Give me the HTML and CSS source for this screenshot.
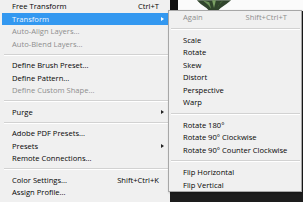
FILE: index.html
```html
<!DOCTYPE html>
<html>
<head>
<meta charset="utf-8">
<link rel="stylesheet" href="styles.css">
</head>
<body>
<div class="screen">
  <div class="menu">
    <div class="item"><span class="label">Free Transform</span><span class="key">Ctrl+T</span><span class="sub"></span></div>
    <div class="item active"><span class="label">Transform</span><span class="key"></span><span class="sub"><i class="arrow"></i></span></div>
    <div class="item disabled"><span class="label">Auto-Align Layers...</span><span class="key"></span><span class="sub"></span></div>
    <div class="item disabled"><span class="label">Auto-Blend Layers...</span><span class="key"></span><span class="sub"></span></div>
    <div class="sep"></div>
    <div class="item"><span class="label">Define Brush Preset...</span><span class="key"></span><span class="sub"></span></div>
    <div class="item"><span class="label">Define Pattern...</span><span class="key"></span><span class="sub"></span></div>
    <div class="item disabled"><span class="label">Define Custom Shape...</span><span class="key"></span><span class="sub"></span></div>
    <div class="sep"></div>
    <div class="item"><span class="label">Purge</span><span class="key"></span><span class="sub"><i class="arrow"></i></span></div>
    <div class="sep"></div>
    <div class="item"><span class="label">Adobe PDF Presets...</span><span class="key"></span><span class="sub"></span></div>
    <div class="item"><span class="label">Presets</span><span class="key"></span><span class="sub"><i class="arrow"></i></span></div>
    <div class="item"><span class="label">Remote Connections...</span><span class="key"></span><span class="sub"></span></div>
    <div class="sep"></div>
    <div class="item"><span class="label">Color Settings...</span><span class="key">Shift+Ctrl+K</span><span class="sub"></span></div>
    <div class="item"><span class="label">Assign Profile...</span><span class="key"></span><span class="sub"></span></div>
  </div>
  <div class="canvas">
    <div class="photo">
      <div class="frame"></div>
      <svg class="plant" width="38" height="11" viewBox="0 0 40 11">
        <path d="M2 0 L38 0 L33 4 L27 8 L24 11 L15 11 L12 8 L6 4 Z" fill="#30452c"/>
        <path d="M8 0 L14 5 L17 9 L15 2 Z" fill="#6c9158"/>
        <path d="M30 0 L25 5 L23 9 L27 2 Z" fill="#5d8249"/>
        <path d="M18 0 L20 8 L22 0 Z" fill="#7aa063"/>
      </svg>
    </div>
    <div class="dark"></div>
  </div>
  <div class="submenu">
    <div class="item disabled"><span class="label">Again</span><span class="key">Shift+Ctrl+T</span><span class="sub"></span></div>
    <div class="sep"></div>
    <div class="item"><span class="label">Scale</span></div>
    <div class="item"><span class="label">Rotate</span></div>
    <div class="item"><span class="label">Skew</span></div>
    <div class="item"><span class="label">Distort</span></div>
    <div class="item"><span class="label">Perspective</span></div>
    <div class="item"><span class="label">Warp</span></div>
    <div class="sep"></div>
    <div class="item"><span class="label">Rotate 180°</span></div>
    <div class="item"><span class="label">Rotate 90° Clockwise</span></div>
    <div class="item"><span class="label">Rotate 90° Counter Clockwise</span></div>
    <div class="sep"></div>
    <div class="item"><span class="label">Flip Horizontal</span></div>
    <div class="item"><span class="label">Flip Vertical</span></div>
  </div>
</div>
</body>
</html>
```
FILE: styles.css
```css
html, body {
  margin: 0;
  padding: 0;
  width: 303px;
  height: 202px;
  overflow: hidden;
}
body {
  font-family: "Open Sans", "Noto Sans", sans-serif;
  font-size: 7.6px;
  color: #050505;
}
.screen {
  position: relative;
  display: flex;
  width: 303px;
  height: 202px;
}
.menu {
  width: 170px;
  flex: none;
  background: #f0f0f0;
  display: flex;
  flex-direction: column;
}
.item {
  height: 12.5px;
  margin-left: 2px;
  width: 166px;
  box-sizing: border-box;
  padding-left: 10px;
  padding-right: 2px;
  display: grid;
  grid-template-columns: 1fr auto 7px;
  align-items: center;
  white-space: nowrap;
}
.item.active {
  background: #3398f0;
  color: #eef6ff;
}
.item.disabled {
  color: #8e8e8e;
}
.sub {
  display: flex;
  justify-content: center;
  align-items: center;
}
.arrow {
  width: 0;
  height: 0;
  border-top: 2.5px solid transparent;
  border-bottom: 2.5px solid transparent;
  border-left: 3px solid #222;
}
.active .arrow {
  border-left-color: #fff;
}
.sep {
  height: 0;
  margin: 3.5px 0 3.5px 4px;
  border-top: 1px solid #d2d2d2;
  border-bottom: 1px solid #ffffff;
}
.canvas {
  flex: 1;
  display: flex;
  flex-direction: column;
}
.photo {
  height: 11px;
  background: #fbfbfb;
  display: flex;
  flex: none;
}
.frame {
  width: 8px;
  background: #111;
}
.plant {
  margin-left: 17px;
}
.dark {
  flex: 1;
  background: #1d1d1d;
}
.submenu {
  position: absolute;
  left: 168px;
  top: 10px;
  width: 134px;
  height: 182px;
  box-sizing: border-box;
  background: #f0f0f0;
  border: 1px solid #a7a7a7;
  display: flex;
  flex-direction: column;
  box-shadow: 1px 1px 2px rgba(0,0,0,0.3);
}
.submenu .item {
  width: auto;
  margin-left: 0;
  padding-left: 14px;
  padding-right: 14px;
  grid-template-columns: 1fr auto 0;
}
.submenu .sep {
  margin: 4px 1px 4px 2px;
}
```
